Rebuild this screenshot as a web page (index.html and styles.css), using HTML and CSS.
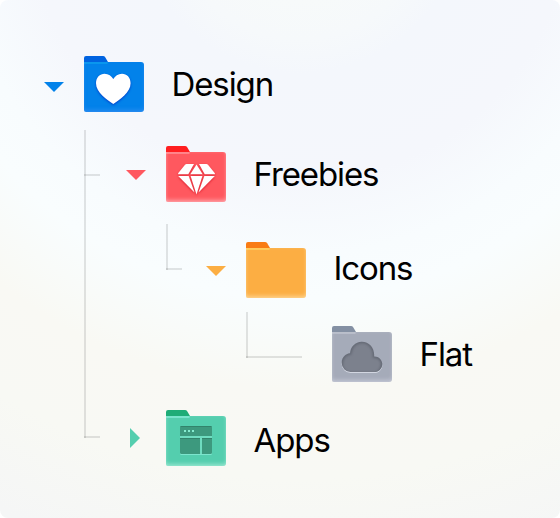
FILE: index.html
```html
<!DOCTYPE html>
<html lang="en">
<head>
<meta charset="utf-8">
<title>Folders</title>
<link rel="stylesheet" href="styles.css">
</head>
<body>
<main class="card">
  <div class="row row-design blue">
    <svg class="caret" width="20" height="10" viewBox="0 0 20 10"><path d="M0 0H20L10 10Z"/></svg>
    <div class="folder">
      <svg class="tab" width="24" height="6" viewBox="0 0 24 6"><path d="M0 6V2Q0 0 2 0H19Q20.500 0 21.200 1.200L24 6Z"/></svg>
      <div class="front">
        <svg class="glyph heart" width="60" height="50" viewBox="0 6 60 50"><path d="M29.300 48C23 43.800 12 36.500 12 27.200C12 21.500 15.800 17.700 20.600 17.700C24.600 17.700 27.500 19.800 29.300 23.100C31.100 19.800 34 17.700 38 17.700C42.800 17.700 46.600 21.500 46.600 27.200C46.600 36.500 35.600 43.800 29.300 48Z" fill="#fff"/></svg>
      </div>
    </div>
    <span class="label">Design</span>
  </div>
  <div class="branch branch-design">
    <svg class="rail" width="16" height="308" viewBox="0 0 16 308"><path d="M1 0V308"/><path d="M0 45H16"/><path d="M0 307H16"/></svg>
    <div class="children">
      <div class="row red">
        <svg class="caret" width="20" height="10" viewBox="0 0 20 10"><path d="M0 0H20L10 10Z"/></svg>
        <div class="folder">
          <svg class="tab" width="24" height="6" viewBox="0 0 24 6"><path d="M0 6V2Q0 0 2 0H19Q20.500 0 21.200 1.200L24 6Z"/></svg>
          <div class="front">
            <svg class="glyph gem" width="60" height="50" viewBox="0 6 60 50"><g fill="#fff"><path d="M20.500 18H28L22.300 28.300H12.100V27.300L19 18.800Q19.700 18 20.500 18Z"/><path d="M40.500 18H33L38.700 28.300H48.900V27.300L42 18.800Q41.300 18 40.500 18Z"/><path d="M30.500 18.600L36.700 28.300H24.300Z"/><path d="M12.200 30H22.700L28.500 46.500Z"/><path d="M48.800 30H38.300L32.500 46.500Z"/><path d="M24.600 30H36.400L30.500 48.500Z"/></g></svg>
          </div>
        </div>
        <span class="label">Freebies</span>
      </div>
      <div class="branch branch-freebies">
        <svg class="rail" width="16" height="46" viewBox="0 0 16 46"><path d="M1 0V46"/><path d="M0 45H16"/></svg>
        <div class="children">
          <div class="row row-icons orange">
            <svg class="caret" width="20" height="10" viewBox="0 0 20 10"><path d="M0 0H20L10 10Z"/></svg>
            <div class="folder">
              <svg class="tab" width="24" height="6" viewBox="0 0 24 6"><path d="M0 6V2Q0 0 2 0H19Q20.500 0 21.200 1.200L24 6Z"/></svg>
              <div class="front"></div>
            </div>
            <span class="label">Icons</span>
          </div>
          <div class="branch branch-icons">
            <svg class="rail" width="56" height="46" viewBox="0 0 56 46"><path d="M1 0V46"/><path d="M0 45H56"/></svg>
            <div class="children">
              <div class="row gray">
                <div class="folder">
                  <svg class="tab" width="24" height="6" viewBox="0 0 24 6"><path d="M0 6V2Q0 0 2 0H19Q20.500 0 21.200 1.200L24 6Z"/></svg>
                  <div class="front">
                    <svg class="glyph cloud" width="60" height="50" viewBox="0 6 60 50">
                      <defs><clipPath id="cloud"><path d="M18.500 46A9.200 9.200 0 0 1 9.700 36.800C9.700 31.500 13.500 27.700 18 27.300C18.500 21 23.300 15.800 29.800 15.800C36.800 15.800 42.300 21.500 42.200 29.200V30.500C46.700 30.400 50.300 34 50.300 38.200C50.300 42.500 46.800 46 42.400 46Z"/></clipPath></defs>
                      <path d="M18.500 46A9.200 9.200 0 0 1 9.700 36.800C9.700 31.500 13.500 27.700 18 27.300C18.500 21 23.300 15.800 29.800 15.800C36.800 15.800 42.300 21.500 42.200 29.200V30.500C46.700 30.400 50.300 34 50.300 38.200C50.300 42.500 46.800 46 42.400 46Z" fill="#7c818d"/>
                      <g clip-path="url(#cloud)"><path class="inner" d="M18.500 48A9.200 9.200 0 0 1 9.700 36.800C9.700 31.500 13.500 27.700 18 27.300C18.500 21 23.300 15.800 29.800 15.800C36.800 15.800 42.300 21.500 42.200 29.200V30.500C46.700 30.400 50.300 34 50.300 38.200C50.300 42.500 46.800 48 42.400 48Z"/></g>
                    </svg>
                  </div>
                </div>
                <span class="label">Flat</span>
              </div>
            </div>
          </div>
        </div>
      </div>
      <div class="row row-apps green">
        <svg class="caret caret-closed" width="10" height="20" viewBox="0 0 10 20"><path d="M0 0L10 10L0 20Z"/></svg>
        <div class="folder">
          <svg class="tab" width="24" height="6" viewBox="0 0 24 6"><path d="M0 6V2Q0 0 2 0H19Q20.500 0 21.200 1.200L24 6Z"/></svg>
          <div class="front">
            <svg class="glyph window" width="60" height="50" viewBox="0 6 60 50">
              <path d="M14 26H46V28H36V44H34V28H14Z" fill="#6fdcc0"/>
              <path d="M15.500 16H44.500Q46 16 46 17.500V26H14V17.500Q14 16 15.500 16Z M14 28H34V44H15.500Q14 44 14 42.500Z M36 28H46V42.500Q46 44 44.500 44H36Z" fill="#3d997e"/>
              <path d="M14.500 16.500H45.500M14 28.500H34M36 28.500H46" stroke="#32836b"/>
              <path d="M18 20h2v2h-2zM22 20h2v2h-2zM26 20h2v2h-2z" fill="#86ecd0"/>
            </svg>
          </div>
        </div>
        <span class="label">Apps</span>
      </div>
    </div>
  </div>
</main>
</body>
</html>
```
FILE: styles.css
```css
body {
  margin: 0;
  background: #fff;
}

svg {
  display: block;
  flex: none;
}

.card {
  box-sizing: border-box;
  width: 560px;
  height: 518px;
  padding: 56px 0 0 44px;
  border-radius: 8px;
  overflow: hidden;
  background: radial-gradient(circle at 300px -91px, #f7fafa 91px, #f6f9fb 130px, #f4f7fc 165px, #f5f7fc 270px, #f8fcfe 345px, #f9fdfe 390px, #f9f9f4 480px, #f8f9f4 570px, #f5f6f6 670px);
}

.row {
  display: flex;
  align-items: flex-start;
  height: 56px;
}

.caret {
  margin: 24px 20px 0 0;
  fill: var(--front);
}

.row-design .caret {
  margin-top: 26px;
}

.caret-closed {
  margin: 18px 26px 0 4px;
}

.folder {
  width: 60px;
  height: 56px;
  flex: none;
}

.tab {
  fill: var(--tab);
}

.front {
  height: 50px;
  border-radius: 0 3px 3px 2px;
  background: linear-gradient(var(--lip), var(--lip)) 0 0 / 23.5px 2px no-repeat var(--front);
  box-shadow: inset 0 -3px 4px -1px var(--glow), inset 0 0 3px var(--edge);
}

.label {
  margin-left: 27.5px;
  font: 400 33px/40px Inter, "Liberation Sans", sans-serif;
  letter-spacing: -1.1px;
  color: #000;
  padding-top: 8px;
  white-space: nowrap;
}

.row-icons .label {
  padding-top: 6px;
}

.row-apps .label {
  padding-top: 10px;
}

.branch {
  display: flex;
  align-items: flex-start;
  margin-left: 40px;
}

.rail {
  fill: none;
  stroke: rgba(0, 0, 0, 0.1);
  stroke-width: 2;
}

.branch-design > .rail { margin-top: 18px; }
.branch-design > .children { padding: 34px 0 0 26px; }
.branch-freebies > .rail { margin-top: 22px; }
.branch-freebies > .children { padding: 40px 0 0 24px; }
.branch-icons > .rail { margin-top: 14px; }
.branch-icons > .children { padding: 28px 0 0 30px; }

.row-apps {
  margin-top: 28px;
}

.blue {
  --tab: #0063e0;
  --front: #0282ea;
  --lip: #0999ee;
  --glow: rgba(70, 145, 245, 0.6);
  --edge: rgba(60, 140, 240, 0.2);
}

.red {
  --tab: #ff1e20;
  --front: #ff585f;
  --lip: #ff8288;
  --glow: rgba(255, 190, 195, 0.7);
  --edge: rgba(255, 160, 165, 0.4);
}

.orange {
  --tab: #f97c14;
  --front: #fcae43;
  --lip: #ffcb55;
  --glow: rgba(255, 225, 170, 0.7);
  --edge: rgba(255, 210, 140, 0.4);
}

.gray {
  --tab: #8490a3;
  --front: #a5abb9;
  --lip: #b8bdc9;
  --glow: rgba(205, 208, 222, 0.7);
  --edge: rgba(200, 204, 216, 0.4);
}

.green {
  --tab: #1eac77;
  --front: #54ceae;
  --lip: #78e5cd;
  --glow: rgba(175, 240, 220, 0.7);
  --edge: rgba(140, 230, 205, 0.4);
}

.heart {
  filter: drop-shadow(0 1px 1px rgba(0, 30, 190, 0.7));
}

.gem {
  filter: drop-shadow(0 1px 1px rgba(200, 0, 20, 0.65));
}

.cloud {
  filter: drop-shadow(0 1.5px 0.5px rgba(215, 218, 230, 0.9));
}

.inner {
  fill: none;
  stroke: rgba(70, 75, 86, 0.45);
  stroke-width: 3;
  filter: blur(0.8px);
}

.window {
  filter: drop-shadow(0 1px 0.5px #7ce5cd);
}
```
